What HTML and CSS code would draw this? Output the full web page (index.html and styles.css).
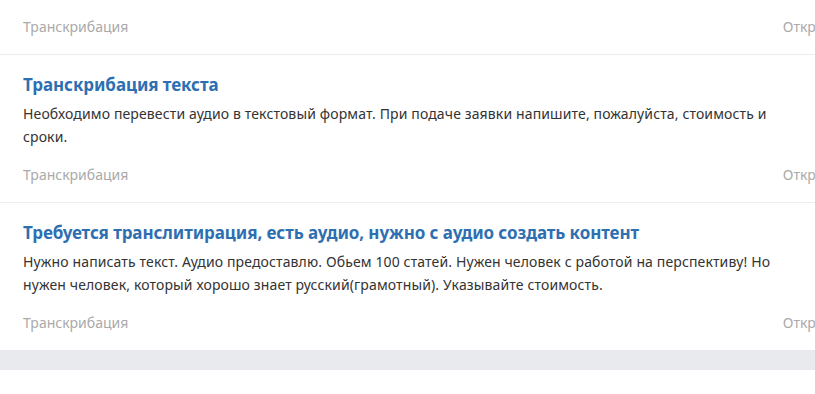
FILE: index.html
```html
<!DOCTYPE html>
<html>
<head>
    <meta charset="UTF-8">
    <title>Заказы</title>
    <link rel="stylesheet" href="styles.css">
</head>
<body>
    <div class="orders">
        <!-- tail of the previous order -->
        <div class="order order-tail">
            <div class="order-meta">
                <span class="category">Транскрибация</span>
                <span class="status">Открыт</span>
            </div>
        </div>

        <div class="order">
            <a class="order-title" href="#">Транскрибация текста</a>
            <p class="order-text">Необходимо перевести аудио в текстовый формат. При подаче заявки напишите, пожалуйста, стоимость и сроки.</p>
            <div class="order-meta">
                <span class="category">Транскрибация</span>
                <span class="status">Открыт</span>
            </div>
        </div>

        <div class="order">
            <a class="order-title" href="#">Требуется транслитирация, есть аудио, нужно с аудио создать контент</a>
            <p class="order-text">Нужно написать текст. Аудио предоставлю. Обьем 100 статей. Нужен человек с работой на перспективу! Но нужен человек, который хорошо знает русский(грамотный). Указывайте стоимость.</p>
            <div class="order-meta">
                <span class="category">Транскрибация</span>
                <span class="status">Открыт</span>
            </div>
        </div>
    </div>
    <div class="footer-band"></div>
</body>
</html>
```

FILE: styles.css
```css
html, body {
    overflow: hidden;
}
body {
    margin: 0;
    font-family: 'Noto Sans', sans-serif;
    background: white;
    color: #333;
}
.orders {
    width: 856px;
}
.order {
    padding: 19px 23px 17px;
    border-bottom: 1px solid #ececec;
}
.order:last-child {
    border-bottom: none;
}
.order-tail {
    padding-top: 17px;
}
.order-title {
    display: block;
    font-size: 17px;
    line-height: 22px;
    letter-spacing: -0.08px;
    font-weight: bold;
    color: #2e6fb2;
    text-decoration: none;
}
.order-text {
    margin: 6px 0 0;
    width: 775px;
    font-size: 14px;
    line-height: 23px;
    letter-spacing: 0.13px;
    color: #333;
}
.order-text + .order-meta {
    margin-top: 17px;
}
.order-meta {
    display: flex;
    justify-content: space-between;
    font-size: 14px;
    line-height: 20px;
    color: #aaa;
}
.footer-band {
    height: 20px;
    background: #e9eaee;
}
```
